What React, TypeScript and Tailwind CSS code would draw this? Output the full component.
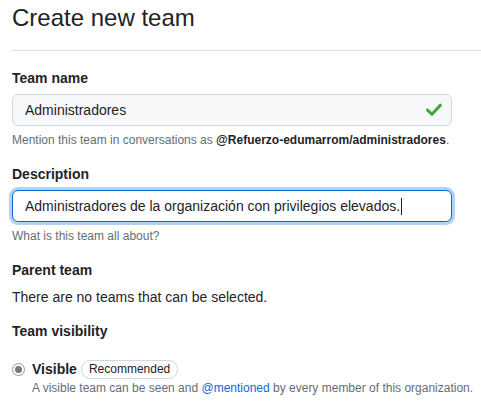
import React from 'react';

const FONT = { fontFamily: '"Liberation Sans", Arial, sans-serif' };

const CheckIcon = () => (
    <svg width="16" height="14" viewBox="0 0 16 14" fill="none" aria-hidden="true">
        <path d="M1.5 7.2L6 11.2L14.2 2.4" stroke="#3fa83a" strokeWidth="3" strokeLinecap="square" />
    </svg>
);

const App: React.FC = () => {
    return (
        <div className="min-h-[406px] overflow-hidden bg-white pl-3 text-[#1f2328]" style={FONT}>
            <div className="border-b border-[#d8dee4] pb-[14px]">
                <h1 className="text-[24px] leading-[36px] font-normal">Create new team</h1>
            </div>

            <div className="w-[440px]">
                <div className="mt-[17px] text-[14px] leading-[20px] font-semibold">Team name</div>
                <div className="mt-[6px] flex h-[32px] items-center justify-between rounded-[6px] border border-[#d0d7de] bg-[#f6f8fa] pl-3 pr-[9px] text-[14px]">
                    <span>Administradores</span>
                    <CheckIcon />
                </div>
                <p className="mt-[5px] whitespace-nowrap text-[12px] leading-[18px] text-[#656d76]">
                    Mention this team in conversations as{' '}
                    <strong className="font-semibold text-[#1f2328]">@Refuerzo-edumarrom/administradores</strong>.
                </p>

                <div className="mt-[15px] text-[14px] leading-[20px] font-semibold">Description</div>
                <div className="mt-[6px] flex h-[32px] items-center rounded-[6px] border border-[#0969da] bg-white pl-3 text-[14px] shadow-[0_0_0_3px_rgba(9,105,218,0.3)]">
                    <span>Administradores de la organización con privilegios elevados.</span>
                    <span className="ml-px inline-block h-[17px] w-px bg-[#1f2328]" />
                </div>
                <p className="mt-[5px] text-[12px] leading-[18px] text-[#656d76]">What is this team all about?</p>

                <div className="mt-[15px] text-[14px] leading-[20px] font-semibold">Parent team</div>
                <p className="mt-[7px] text-[14px] leading-[20px]">There are no teams that can be selected.</p>

                <div className="mt-[14px] text-[14px] leading-[20px] font-semibold">Team visibility</div>

                <div className="mt-[18px] flex items-center">
                    <span className="flex h-[13px] w-[13px] items-center justify-center rounded-full border border-[#8c959f] bg-white">
                        <span className="h-[7px] w-[7px] rounded-full bg-[#767676]" />
                    </span>
                    <span className="ml-[7px] text-[14px] leading-[20px] font-semibold">Visible</span>
                    <span className="ml-[4px] rounded-full border border-[#d0d7de] px-[7px] text-[12px] leading-[17px] text-[#1f2328]">
                        Recommended
                    </span>
                </div>
                <p className="ml-5 whitespace-nowrap text-[12px] leading-[18px] text-[#656d76]">
                    A visible team can be seen and <span className="text-[#0969da]">@mentioned</span> by every member of this organization.
                </p>
            </div>
        </div>
    );
};

export default App;
